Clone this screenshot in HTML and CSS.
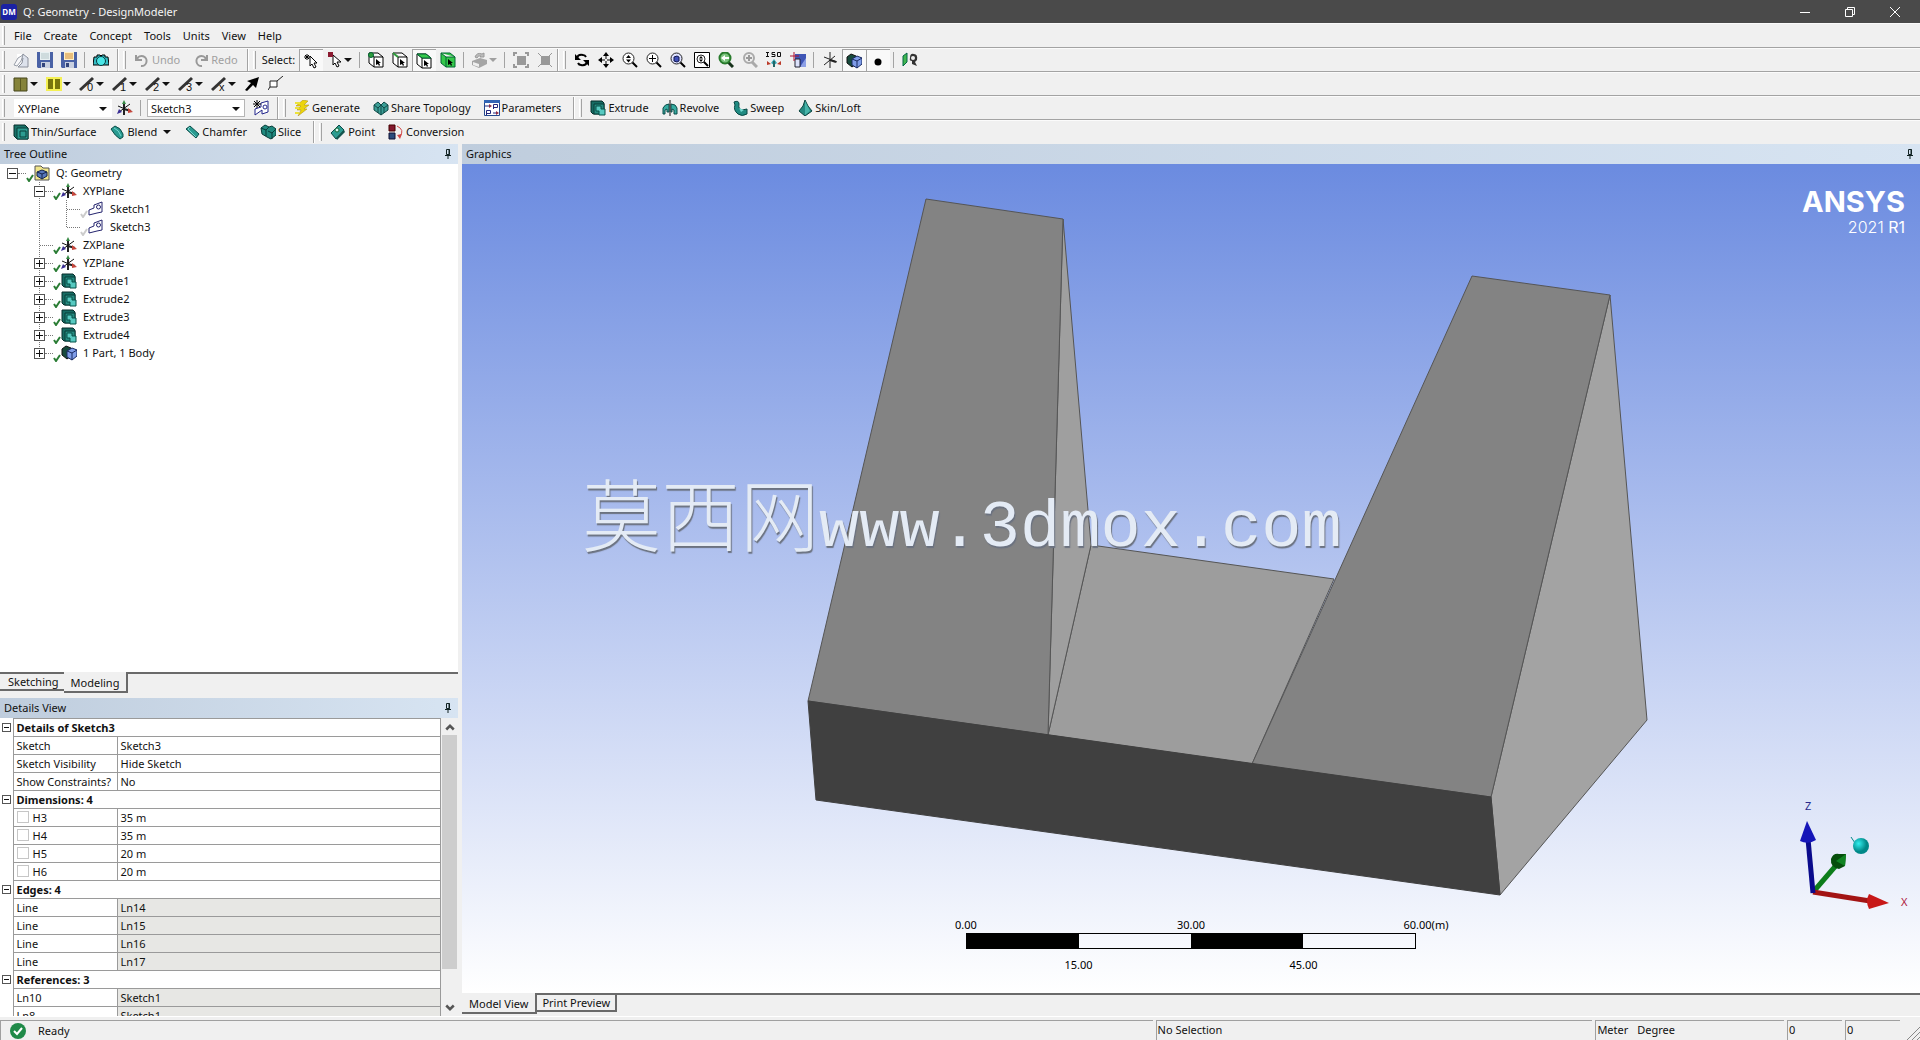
FILE: index.html
```html
<!DOCTYPE html>
<html lang="en">
<head>
<meta charset="utf-8">
<title>Q: Geometry - DesignModeler</title>
<link rel="stylesheet" href="styles.css">
</head>
<body>
<svg class="sprite" aria-hidden="true">
  <symbol id="new" viewBox="0 0 16 16"><path d="M4 2h8l3 3v10H5z" fill="#fff"/><path d="M10 2l5 4v9H5l4-4 1-5H8z" fill="#dde2ec" stroke="#8a8f9b"/><path d="M1 13l4-7 5-3-2 6-4 5z" fill="#f8f8fa" stroke="#999fa9"/></symbol>
  <symbol id="save" viewBox="0 0 16 16"><path d="M0 0h16v16H1l-1-1z" fill="#4a62a6"/><path d="M3 0h10v8H3z" fill="#e8f0f2"/><path d="M4 2h8M4 4h8M4 6h8" stroke="#b5c6c8"/><path d="M4 10h9v6H4z" fill="#c9d0e0"/><path d="M5 11h3v4H5z" fill="#33457c"/></symbol>
  <symbol id="saveas" viewBox="0 0 16 16"><path d="M0 0h16v16H1l-1-1z" fill="#4a62a6"/><path d="M3 0h10v8H3z" fill="#fff1c6"/><path d="M4 2h8M4 4h8M4 6h8" stroke="#d08a32"/><path d="M4 10h9v6H4z" fill="#c9d0e0"/><path d="M5 11h3v4H5z" fill="#33457c"/></symbol>
  <symbol id="camera" viewBox="0 0 16 16"><path d="M1 5h3V3h3l1 1 1-1h3v2h3l1 8H0z" fill="#35bcc4" stroke="#000"/><circle cx="8" cy="9" r="4.500" fill="#49e6e6" stroke="#07383c"/></symbol>
  <symbol id="undo" viewBox="0 0 16 16"><path d="M3 7a5 5 0 1 1 4 7" fill="none" stroke="#999" stroke-width="2"/><path d="M2 3v5h6" fill="none" stroke="#999" stroke-width="2"/></symbol>
  <symbol id="redo" viewBox="0 0 16 16"><path d="M13 7a5 5 0 1 0-4 7" fill="none" stroke="#999" stroke-width="2"/><path d="M14 3v5H8" fill="none" stroke="#999" stroke-width="2"/></symbol>
  <symbol id="cursor" viewBox="0 0 16 16"><path d="M7 3v10l2-2 2 4 2-1-2-4h3z" fill="#fff" stroke="#000"/><path d="M4 1v6M1 4h6M2 2l4 4M6 2L2 6" stroke="#000"/></symbol>
  <symbol id="pick" viewBox="0 0 16 16"><path d="M6 3v10l2-2 2 4 2-1-2-4h4z" fill="#fff" stroke="#000"/><path d="M1 0h5v5H1z" fill="#8b1a30"/></symbol>
  <symbol id="fpoint" viewBox="0 0 16 16"><path d="M1 1h9l5 4v10H6l-5-4z M1 1l5 4h9M6 5v10" fill="#fff" stroke="#000"/><circle cx="3" cy="3" r="2.500" fill="#2f9c3c" stroke="#063"/><path d="M8 7v6l2-1 1 2 1-1-1-2h2z"/></symbol>
  <symbol id="fedge" viewBox="0 0 16 16"><path d="M1 1h9l5 4v10H6l-5-4z M1 1l5 4h9M6 5v10" fill="#fff" stroke="#000"/><path d="M1 1l5 4" stroke="#2f9c3c" stroke-width="2"/><path d="M8 7v6l2-1 1 2 1-1-1-2h2z"/></symbol>
  <symbol id="fface" viewBox="0 0 16 16"><path d="M1 1h9l5 4v10H6l-5-4z M1 1l5 4h9M6 5v10" fill="#fff" stroke="#000"/><path d="M1 1h9l5 4H6z" fill="#35c84b" stroke="#063"/><path d="M8 7v6l2-1 1 2 1-1-1-2h2z"/></symbol>
  <symbol id="fbody" viewBox="0 0 16 16"><path d="M1 1h9l5 4v10H6l-5-4z M1 1l5 4h9M6 5v10" fill="#35c84b" stroke="#063"/><path d="M8 7v6l2-1 1 2 1-1-1-2h2z"/></symbol>
  <symbol id="extend" viewBox="0 0 16 16"><path d="M0 9l8-3 7 2v4l-8 4-7-3z" fill="#a5a5a5"/><path d="M1 10l6 2v3l-6-2z" fill="#eee"/><path d="M3 5q2-5 7-3l2-1v4H8l1-1Q6 3 5 6z" fill="#bbb" stroke="#999"/></symbol>
  <symbol id="grow" viewBox="0 0 16 16"><path d="M4 4h9v9H4z" fill="#999"/><path d="M1 4V1h3M12 1h3v3M15 12v3h-3M4 15H1v-3" fill="none" stroke="#999" stroke-width="2"/></symbol>
  <symbol id="shrink" viewBox="0 0 16 16"><path d="M4 4h9v9H4z" fill="#999"/><path d="M1 1l4 4M15 1l-3 3M1 15l3-3M15 15l-3-3" stroke="#999"/></symbol>
  <symbol id="rotate" viewBox="0 0 16 16"><path d="M3 6q1-4 6-3 2 0 3 2M13 10q-1 4-6 3-2 0-3-2" fill="none" stroke="#000" stroke-width="2"/><path d="M1 2v6h6zM15 14V8H9z"/></symbol>
  <symbol id="pan" viewBox="0 0 16 16"><path d="M8 3v4M8 9v4M3 8h4M9 8h4" stroke="#000"/><path d="M8 0l3 4H5zM8 16l3-4H5zM0 8l4-3v6zM16 8l-4-3v6z"/></symbol>
  <symbol id="zoom" viewBox="0 0 16 16"><path d="M10 10l5 5" stroke="#000" stroke-width="2"/><circle cx="6.500" cy="6.500" r="5.500" fill="#fff" stroke="#222"/><path d="M4 6l2.500-3L9 6zM4 7.500h5l-2.500 3z"/></symbol>
  <symbol id="zoomin" viewBox="0 0 16 16"><path d="M10 10l5 5" stroke="#000" stroke-width="2"/><circle cx="6.500" cy="6.500" r="5.500" fill="#fff" stroke="#222"/><path d="M3 6.500h7M6.500 3v7" stroke="#000"/></symbol>
  <symbol id="zoomfit" viewBox="0 0 16 16"><path d="M10 10l5 5" stroke="#000" stroke-width="2"/><circle cx="6.500" cy="6.500" r="5.500" fill="#dfe2ff" stroke="#222"/><path d="M4 5l3-1 2 1v4l-2 1-3-1z" fill="#4050b8" stroke="#101850"/></symbol>
  <symbol id="zoombox" viewBox="0 0 16 16"><path d="M.5.500h15v15H.5z" fill="#fff" stroke="#000"/><path d="M9 9l5 5" stroke="#000" stroke-width="2"/><circle cx="7" cy="7" r="4" fill="#fff" stroke="#222"/><path d="M5 6.500L7 4l2 2.500zM5 7.500h4L7 10z"/></symbol>
  <symbol id="prev" viewBox="0 0 16 16"><path d="M10 10l5 5" stroke="#17321b" stroke-width="3"/><circle cx="7" cy="6" r="5.500" fill="#7cc47e" stroke="#277a2b" stroke-width="2"/><path d="M3 6l4-3v2h4v2H7v2z" fill="#fff"/></symbol>
  <symbol id="next" viewBox="0 0 16 16"><path d="M10 10l5 5" stroke="#aaa" stroke-width="3"/><circle cx="7" cy="6" r="5" fill="#eee" stroke="#aaa" stroke-width="2"/><path d="M4 6h6M7 3v6" stroke="#999" stroke-width="2"/></symbol>
  <symbol id="iso" viewBox="0 0 16 16"><path d="M1.500 0v5M0 .5h3M0 4.500h3M9 .5H6v2h3v2H5.500M11.500.500h3v4h-3z" fill="none" stroke="#111"/><path d="M8 7l3 4-3 2-3-2z" fill="#36a4b4"/><path d="M8 9v6" stroke="#266" stroke-width="2"/><path d="M5 12l-4-3v4zM11 12l4-3v4z" fill="#bb3b2a"/></symbol>
  <symbol id="lookat" viewBox="0 0 16 16"><path d="M5 2h11v13H5z" fill="#3e55b5"/><path d="M10 15l6-9v9z" fill="#8da0e6"/><path d="M5 7h5v8H5z" fill="#dce2fb" stroke="#223"/><path d="M4 0v9M0 4h9" stroke="#b01030"/></symbol>
  <symbol id="plane3" viewBox="0 0 16 16"><path d="M8 0v16M2 13L13 4M2 5l13 5" stroke="#222"/><path d="M8 8l6 2" stroke="#222" stroke-width="2"/></symbol>
  <symbol id="model" viewBox="0 0 16 16"><path d="M1 4l4-3 5 2v8l-4 3-5-4z" fill="#174a3c" stroke="#111"/><path d="M6 6l5-3 5 2v6l-5 4-5-3z" fill="#7f9ce8" stroke="#192a60"/><path d="M6 6l5 2 5-3M11 8v7" fill="none" stroke="#192a60"/></symbol>
  <symbol id="point" viewBox="0 0 16 16"><circle cx="8" cy="9" r="3.500"/></symbol>
  <symbol id="face" viewBox="0 0 16 16"><path d="M1 4l4-3v9l-4 4z" fill="#41b64e" stroke="#064"/><path d="M8 6q0-5 4-4 4 0 3 6l-2 2 2 4-5-2V9q-3 0-2-3" fill="#333"/><circle cx="11" cy="6" r="2" fill="#eee"/></symbol>
  <symbol id="cfront" viewBox="0 0 16 16"><path d="M1 2h13v13H1z" fill="#85833a" stroke="#44441a"/><path d="M7.500 2v13" stroke="#5a5920"/></symbol>
  <symbol id="cshare" viewBox="0 0 16 16"><path d="M0 1h16v14H0z" fill="#f4f054"/><path d="M2 3h5v10H2zM9 3h5v10H9z" fill="#77750d"/></symbol>
  <symbol id="edge" viewBox="0 0 16 16"><path d="M1 14L14 2" stroke="#333" stroke-width="3"/></symbol>
  <symbol id="arrow" viewBox="0 0 16 16"><path d="M15 1l-3 11-3-3-6 6-2-1 6-7-4-2z"/></symbol>
  <symbol id="vertex" viewBox="0 0 16 16"><path d="M2 5h7v6H2zM9 5l6-5M2 11l-2 3" fill="#fff" stroke="#222"/></symbol>
  <symbol id="axes" viewBox="0 0 16 16"><path d="M7 2v13M7 9l7 2" stroke="#222" stroke-width="2"/><path d="M13 4L2 12M1 6l7 3" stroke="#111"/><path d="M5 4l2-4 2 4z" fill="#398a45"/><path d="M11 8l5 4-5 1z" fill="#c7463c"/><path d="M0 14l2-5 3 3z" fill="#3a2e94"/></symbol>
  <symbol id="sketchnew" viewBox="0 0 16 16"><path d="M2 15v-6l6-2V3l7-2v11l-6 2v-4z" fill="#fff" stroke="#23268c"/><circle cx="12" cy="7" r="2" fill="none" stroke="#23268c"/><path d="M4 0v8M0 4h8M1 1l6 6M7 1L1 7" stroke="#000"/></symbol>
  <symbol id="sketch" viewBox="0 0 16 16"><path d="M1 14V9l5-2V4l8-3v10l-5 1-4 1z" fill="#fff" stroke="#24246e"/><circle cx="10.500" cy="6" r="2" fill="none" stroke="#24246e"/></symbol>
  <symbol id="bolt" viewBox="0 0 16 16"><path d="M9 0l5 1-4 4h5l-5 4h3L4 16l3-6H3l4-4H2z" fill="#ecd40c" stroke="#a88b10" stroke-width=".5"/><path d="M1 3h5M1 8h4M1 13h4" stroke="#ece33a" stroke-width="2"/></symbol>
  <symbol id="share" viewBox="0 0 16 16"><path d="M1 5l4-3 3 3 3-3 4 3v5l-7 5-7-5z" fill="#3b9e96" stroke="#114a48"/><path d="M1 5l4 3 3-3 3 3 4-3M5 8v5M11 8v5M8 5v10" fill="none" stroke="#114a48"/></symbol>
  <symbol id="param" viewBox="0 0 16 16"><path d="M.5.500h15v15H.5z" fill="#fff" stroke="#23488d"/><path d="M0 0h16v3H0z" fill="#3264b4"/><path d="M1 6h4M9.500 9V4.500h4v3h-4M2.500 15v-4.500h4v3h-4M9 13h4" fill="none" stroke="#23277c"/><path d="M5 4l3 2-3 2zM12 11l3 2-3 2z" fill="#912b45"/></symbol>
  <symbol id="extrude" viewBox="0 0 16 16"><path d="M1 1h11l2 2v11H3l-2-2z" fill="#176b63" stroke="#072d2b"/><path d="M4 4h10v10H4z" fill="#258b80" stroke="#083d39"/><path d="M6 6h5v3h4v6h-6v-4H6z" fill="#56c9c0" stroke="#075049"/></symbol>
  <symbol id="revolve" viewBox="0 0 16 16"><path d="M1 8q2-4 6-4v8H5V9l-2 1v4H1zM9 4q5 0 6 4v6h-3v-4l-2-1v3H9z" fill="#36aba0" stroke="#0b4b48"/><path d="M8 0v16" stroke="#111"/></symbol>
  <symbol id="sweep" viewBox="0 0 16 16"><path d="M2 2q5-2 5 2-1 5 3 6l5-1v5q-5 3-9 0-5-4-3-9z" fill="#218b82" stroke="#084743"/><path d="M7 8l5 2-3 2z" fill="#74dad1"/></symbol>
  <symbol id="loft" viewBox="0 0 16 16"><path d="M8 0l3 6 4 5-7 5-6-5 4-5z" fill="#248880" stroke="#0c4540"/><path d="M8 1v14l5-4z" fill="#47b5aa"/></symbol>
  <symbol id="thin" viewBox="0 0 16 16"><path d="M1 1h11l3 3v11H4l-3-3z" fill="#187167" stroke="#072d2b"/><path d="M4 4h11v11H4zM7 7h6v6H7z" fill="#2b9c91" stroke="#083d39"/></symbol>
  <symbol id="blend" viewBox="0 0 16 16"><path d="M2 5l4-3q6 2 8 8v3l-3 2Q6 12 2 5z" fill="#299b91" stroke="#0b4d49"/><path d="M5 4q5 2 7 8" fill="none" stroke="#78d7cf"/></symbol>
  <symbol id="chamfer" viewBox="0 0 16 16"><path d="M2 5l4-3 9 8-3 4z" fill="#299b91" stroke="#0b4d49"/><path d="M6 3L4 5l8 8" fill="none" stroke="#78d7cf"/></symbol>
  <symbol id="slice" viewBox="0 0 16 16"><path d="M1 4l4-3 4 2 3-1 4 3v6l-5 4-4-2-5-3z" fill="#208a7f" stroke="#083d39"/><path d="M1 4l5 2 3-3M6 6v6M8 7l4 2 4-4M12 9v6" fill="none" stroke="#073b38"/></symbol>
  <symbol id="cpoint" viewBox="0 0 16 16"><path d="M1 9l8-8 5 5-8 9z" fill="#2b9c91" stroke="#0d4846"/><path d="M6 14l8-8 1 2-8 8z" fill="#14564f"/><circle cx="7" cy="6" r="2" fill="#d5f8f5" stroke="#163"/></symbol>
  <symbol id="convert" viewBox="0 0 16 16"><path d="M1 1h6v6H1z" fill="#84192e" stroke="#400"/><path d="M1 9h6v6H1z" fill="#294b7c" stroke="#113"/><path d="M9 2q8 4 3 10" fill="none" stroke="#d04646"/><path d="M9 11l5-1-2 5z" fill="#d04646"/></symbol>
  <symbol id="project" viewBox="0 0 16 16"><path d="M1 3V1h6l2 2h6v12H1z" fill="#f0e58a" stroke="#555"/><path d="M3 7l5-2 5 2v4l-5 3-5-3z" fill="#5878bd" stroke="#14244b"/><path d="M3 7l5 2 5-2M8 9v5" fill="none" stroke="#14244b"/></symbol>
  <symbol id="check" viewBox="0 0 8 8"><path d="M1 4l2 3 4-6" fill="none" stroke="currentColor" stroke-width="2"/></symbol>
  <symbol id="down" viewBox="0 0 8 8"><path d="M0 2h8L4 6z" fill="currentColor"/></symbol>
  <symbol id="pin" viewBox="0 0 8 12"><path d="M2.500 1.500h3v5h-3zM1 7.500h6M4 8v3M5 1v6" fill="none" stroke="#122"/></symbol>
</svg>

<header class="titlebar">
  <span class="dm">DM</span><h1>Q: Geometry - DesignModeler</h1>
  <div class="winbtns">
    <button aria-label="Minimize"><svg viewBox="0 0 12 12"><path d="M1 6.500h10"/></svg></button>
    <button aria-label="Restore"><svg viewBox="0 0 12 12"><path d="M1.500 3.500h7v7h-7zM3.500 3V1.500h7v7H9"/></svg></button>
    <button aria-label="Close"><svg viewBox="0 0 12 12"><path d="M1 1l10 10M11 1L1 11"/></svg></button>
  </div>
</header>

<nav class="bar menu">
  <i class="grip"></i>
  <button>File</button><button>Create</button><button>Concept</button><button>Tools</button><button>Units</button><button>View</button><button>Help</button>
</nav>

<div class="bar" role="toolbar" aria-label="Standard">
  <div class="group"><i class="grip"></i>
    <button class="tb" aria-label="New"><svg><use href="#new"/></svg></button>
    <button class="tb" aria-label="Save"><svg><use href="#save"/></svg></button>
    <button class="tb" aria-label="Export"><svg><use href="#saveas"/></svg></button>
    <i class="sep"></i>
    <button class="tb" aria-label="Image capture"><svg><use href="#camera"/></svg></button>
  </div>
  <div class="group tight"><i class="grip"></i>
    <button class="tb text" disabled><svg><use href="#undo"/></svg>Undo</button>
    <button class="tb text" disabled><svg><use href="#redo"/></svg>Redo</button>
  </div>
  <div class="group tight"><i class="grip"></i>
    <span class="label">Select:</span>
    <button class="tb on" aria-label="New selection"><svg><use href="#cursor"/></svg></button>
    <button class="tb drop" aria-label="Select mode"><svg><use href="#pick"/></svg><svg class="dn"><use href="#down"/></svg></button>
    <i class="sep"></i>
    <button class="tb" aria-label="Points"><svg><use href="#fpoint"/></svg></button>
    <button class="tb" aria-label="Edges"><svg><use href="#fedge"/></svg></button>
    <button class="tb on" aria-label="Faces"><svg><use href="#fface"/></svg></button>
    <button class="tb" aria-label="Bodies"><svg><use href="#fbody"/></svg></button>
    <i class="sep"></i>
    <button class="tb drop" disabled aria-label="Extend selection"><svg><use href="#extend"/></svg><svg class="dn"><use href="#down"/></svg></button>
    <i class="sep"></i>
    <button class="tb" disabled aria-label="Expand"><svg><use href="#grow"/></svg></button>
    <button class="tb" disabled aria-label="Shrink"><svg><use href="#shrink"/></svg></button>
  </div>
  <div class="group last"><i class="grip"></i>
    <button class="tb" aria-label="Rotate"><svg><use href="#rotate"/></svg></button>
    <button class="tb" aria-label="Pan"><svg><use href="#pan"/></svg></button>
    <button class="tb" aria-label="Zoom"><svg><use href="#zoom"/></svg></button>
    <button class="tb" aria-label="Zoom in"><svg><use href="#zoomin"/></svg></button>
    <button class="tb" aria-label="Zoom to fit"><svg><use href="#zoomfit"/></svg></button>
    <button class="tb" aria-label="Box zoom"><svg><use href="#zoombox"/></svg></button>
    <button class="tb" aria-label="Previous view"><svg><use href="#prev"/></svg></button>
    <button class="tb" disabled aria-label="Next view"><svg><use href="#next"/></svg></button>
    <button class="tb" aria-label="ISO view"><svg><use href="#iso"/></svg></button>
    <button class="tb" aria-label="Look at"><svg><use href="#lookat"/></svg></button>
    <i class="sep"></i>
    <button class="tb" aria-label="Display plane"><svg><use href="#plane3"/></svg></button>
    <button class="tb on" aria-label="Display model"><svg><use href="#model"/></svg></button>
    <button class="tb on" aria-label="Display points"><svg><use href="#point"/></svg></button>
    <i class="sep"></i>
    <button class="tb" aria-label="Look at face"><svg><use href="#face"/></svg></button>
  </div>
</div>

<div class="bar" role="toolbar" aria-label="Display">
  <i class="grip"></i>
  <button class="tb drop" aria-label="Face coloring"><svg><use href="#cfront"/></svg><svg class="dn"><use href="#down"/></svg></button>
  <button class="tb drop" aria-label="Edge coloring"><svg><use href="#cshare"/></svg><svg class="dn"><use href="#down"/></svg></button>
  <button class="tb drop edge"><svg><use href="#edge"/></svg><b>0</b><svg class="dn"><use href="#down"/></svg></button>
  <button class="tb drop edge"><svg><use href="#edge"/></svg><b>1</b><svg class="dn"><use href="#down"/></svg></button>
  <button class="tb drop edge"><svg><use href="#edge"/></svg><b>2</b><svg class="dn"><use href="#down"/></svg></button>
  <button class="tb drop edge"><svg><use href="#edge"/></svg><b>3</b><svg class="dn"><use href="#down"/></svg></button>
  <button class="tb drop edge"><svg><use href="#edge"/></svg><b>x</b><svg class="dn"><use href="#down"/></svg></button>
  <button class="tb" aria-label="Edge direction"><svg><use href="#arrow"/></svg></button>
  <button class="tb" aria-label="Display vertices"><svg><use href="#vertex"/></svg></button>
</div>

<div class="bar" role="toolbar" aria-label="Features">
  <div class="group"><i class="grip"></i>
    <span class="combo flat"><select aria-label="Active plane"><option>XYPlane</option></select><svg class="dn"><use href="#down"/></svg></span>
    <button class="tb" aria-label="New plane"><svg><use href="#axes"/></svg></button>
    <i class="sep"></i>
    <span class="combo"><select aria-label="Active sketch"><option>Sketch3</option></select><svg class="dn"><use href="#down"/></svg></span>
    <button class="tb" aria-label="New sketch"><svg><use href="#sketchnew"/></svg></button>
  </div>
  <div class="group wide"><i class="grip"></i>
    <button class="tb text"><svg><use href="#bolt"/></svg>Generate</button>
    <button class="tb text"><svg><use href="#share"/></svg>Share Topology</button>
    <button class="tb text"><svg><use href="#param"/></svg>Parameters</button>
  </div>
  <div class="group last"><i class="grip"></i>
    <button class="tb text"><svg><use href="#extrude"/></svg>Extrude</button>
    <button class="tb text"><svg><use href="#revolve"/></svg>Revolve</button>
    <button class="tb text"><svg><use href="#sweep"/></svg>Sweep</button>
    <button class="tb text"><svg><use href="#loft"/></svg>Skin/Loft</button>
  </div>
</div>

<div class="bar lastbar" role="toolbar" aria-label="Modify">
  <div class="group wide"><i class="grip"></i>
    <button class="tb text"><svg><use href="#thin"/></svg>Thin/Surface</button>
    <button class="tb text"><svg><use href="#blend"/></svg>Blend<svg class="dn"><use href="#down"/></svg></button>
    <button class="tb text"><svg><use href="#chamfer"/></svg>Chamfer</button>
    <button class="tb text"><svg><use href="#slice"/></svg>Slice</button>
  </div>
  <div class="group last"><i class="grip"></i>
    <button class="tb text"><svg><use href="#cpoint"/></svg>Point</button>
    <button class="tb text"><svg><use href="#convert"/></svg>Conversion</button>
  </div>
</div>

<main class="work">
  <aside class="side">
    <section class="outline">
      <h2 class="phead">Tree Outline<svg class="pin"><use href="#pin"/></svg></h2>
      <ul class="tree">
        <li><div class="node"><button class="box" aria-label="Collapse"></button><i class="dash"></i><svg class="ck"><use href="#check"/></svg><svg class="ic"><use href="#project"/></svg>Q: Geometry</div>
          <ul>
            <li><div class="node"><button class="box" aria-label="Collapse"></button><i class="dash"></i><svg class="ck"><use href="#check"/></svg><svg class="ic"><use href="#axes"/></svg>XYPlane</div>
              <ul>
                <li><div class="node leaf"><i class="dash"></i><svg class="ck dim"><use href="#check"/></svg><svg class="ic"><use href="#sketch"/></svg>Sketch1</div></li>
                <li><div class="node leaf"><i class="dash"></i><svg class="ck dim"><use href="#check"/></svg><svg class="ic"><use href="#sketch"/></svg>Sketch3</div></li>
              </ul>
            </li>
            <li><div class="node leaf"><i class="dash"></i><svg class="ck"><use href="#check"/></svg><svg class="ic"><use href="#axes"/></svg>ZXPlane</div></li>
            <li><div class="node"><button class="box plus" aria-label="Expand"></button><i class="dash"></i><svg class="ck"><use href="#check"/></svg><svg class="ic"><use href="#axes"/></svg>YZPlane</div></li>
            <li><div class="node"><button class="box plus" aria-label="Expand"></button><i class="dash"></i><svg class="ck"><use href="#check"/></svg><svg class="ic"><use href="#extrude"/></svg>Extrude1</div></li>
            <li><div class="node"><button class="box plus" aria-label="Expand"></button><i class="dash"></i><svg class="ck"><use href="#check"/></svg><svg class="ic"><use href="#extrude"/></svg>Extrude2</div></li>
            <li><div class="node"><button class="box plus" aria-label="Expand"></button><i class="dash"></i><svg class="ck"><use href="#check"/></svg><svg class="ic"><use href="#extrude"/></svg>Extrude3</div></li>
            <li><div class="node"><button class="box plus" aria-label="Expand"></button><i class="dash"></i><svg class="ck"><use href="#check"/></svg><svg class="ic"><use href="#extrude"/></svg>Extrude4</div></li>
            <li><div class="node"><button class="box plus" aria-label="Expand"></button><i class="dash"></i><svg class="ck"><use href="#check"/></svg><svg class="ic"><use href="#model"/></svg>1 Part, 1 Body</div></li>
          </ul>
        </li>
      </ul>
      <div class="tabs"><button class="tab">Sketching</button><button class="tab current">Modeling</button><i class="rest"></i></div>
    </section>

    <section class="details">
      <h2 class="phead">Details View<svg class="pin"><use href="#pin"/></svg></h2>
      <div class="dbody">
        <div class="dscroll">
          <table>
            <colgroup><col class="c0"><col class="c1"><col></colgroup>
            <tr><td><button class="box" aria-label="Collapse"></button></td><th colspan="2">Details of Sketch3</th></tr>
            <tr><td></td><td>Sketch</td><td>Sketch3</td></tr>
            <tr><td></td><td>Sketch Visibility</td><td>Hide Sketch</td></tr>
            <tr><td></td><td>Show Constraints?</td><td>No</td></tr>
            <tr><td><button class="box" aria-label="Collapse"></button></td><th colspan="2">Dimensions: 4</th></tr>
            <tr><td></td><td><label><input type="checkbox">H3</label></td><td>35 m</td></tr>
            <tr><td></td><td><label><input type="checkbox">H4</label></td><td>35 m</td></tr>
            <tr><td></td><td><label><input type="checkbox">H5</label></td><td>20 m</td></tr>
            <tr><td></td><td><label><input type="checkbox">H6</label></td><td>20 m</td></tr>
            <tr><td><button class="box" aria-label="Collapse"></button></td><th colspan="2">Edges: 4</th></tr>
            <tr class="ro"><td></td><td>Line</td><td>Ln14</td></tr>
            <tr class="ro"><td></td><td>Line</td><td>Ln15</td></tr>
            <tr class="ro"><td></td><td>Line</td><td>Ln16</td></tr>
            <tr class="ro"><td></td><td>Line</td><td>Ln17</td></tr>
            <tr><td><button class="box" aria-label="Collapse"></button></td><th colspan="2">References: 3</th></tr>
            <tr class="ro"><td></td><td>Ln10</td><td>Sketch1</td></tr>
            <tr class="ro"><td></td><td>Ln8</td><td>Sketch1</td></tr>
          </table>
        </div>
        <div class="scroll">
          <button aria-label="Scroll up"><svg viewBox="0 0 8 8"><path d="M1 6l3-3 3 3"/></svg></button>
          <i class="thumb"></i>
          <button aria-label="Scroll down"><svg viewBox="0 0 8 8"><path d="M1 2l3 3 3-3"/></svg></button>
        </div>
      </div>
    </section>
  </aside>

  <section class="graphics">
    <h2 class="phead">Graphics<svg class="pin"><use href="#pin"/></svg></h2>
    <div class="view">
      <svg class="body3d" viewBox="0 0 1458 829" role="img" aria-label="Solid body">
        <g stroke="#555" stroke-linejoin="round">
          <path d="M586 571L629 381L872 415L790 600z" fill="#9d9d9d"/>
          <path d="M601 55L629 381L586 571z" fill="#9f9f9f"/>
          <path d="M464 35L601 55L586 571L346 537z" fill="#838383"/>
          <path d="M1148 131L1185 556L1038 731L1029 633z" fill="#a3a3a3"/>
          <path d="M1010 112L1148 131L1029 633L790 600z" fill="#838383"/>
          <path d="M346 537L1029 633L1038 731L354 636z" fill="#404040" stroke="#404040"/>
        </g>
      </svg>
      <div class="brand"><strong>ANSYS</strong><span>2021 <b>R1</b></span></div>
      <div class="mark"><span>莫西网</span>www.3dmox.com</div>
      <div class="scale">
        <div class="ticks"><span>0.00</span><span>30.00</span><span>60.00<em>(m)</em></span></div>
        <div class="ruler"><i></i><i></i><i></i><i></i></div>
        <div class="ticks low"><span>15.00</span><span>45.00</span></div>
      </div>
      <svg class="triad" viewBox="0 0 120 120" role="img" aria-label="Axis triad">
        <defs><radialGradient id="ball" cx=".35" cy=".35"><stop offset="0" stop-color="#3ee"/><stop offset="1" stop-color="#088"/></radialGradient></defs>
        <path d="M19 94L44 65" stroke="#0d7d1b" stroke-width="5"/><path d="M36 62q2-6 8-5l7 0-1 12-6 3q-9-2-8-10z" fill="#064f0c"/><path d="M51 57l-1 12-9-5z" fill="#118423"/>
        <path d="M18 95L75 104" stroke="#a31414" stroke-width="5"/><path d="M74 97l20 9-20 6q-4-8 0-15z" fill="#c81818"/>
        <path d="M18 96L13 42" stroke="#0a0a8c" stroke-width="5"/><path d="M12 24l9 19q-8 5-16 1z" fill="#1515b8"/>
        <path d="M56 40l4 6" stroke="#088"/><circle cx="66" cy="49" r="8" fill="url(#ball)"/>
        <text x="10" y="13" fill="#2a2a8c">Z</text><text x="106" y="109" fill="#b02040">X</text>
      </svg>
    </div>
    <div class="tabs gtabs"><button class="tab current">Model View</button><button class="tab">Print Preview</button><i class="rest"></i></div>
  </section>
</main>

<footer class="status">
  <div class="cell ready"><svg viewBox="0 0 16 16"><circle cx="8" cy="8" r="8" fill="#1f8a48"/><path d="M4 8l3 3 5-6" fill="none" stroke="#fff" stroke-width="2"/></svg>Ready</div>
  <div class="cell sel">No Selection</div>
  <div class="cell unit"><span>Meter</span><span>Degree</span></div>
  <div class="cell num">0</div>
  <div class="cell num">0</div>
  <svg class="size" viewBox="0 0 14 14"><path d="M1 14L14 1M6 14l8-8M11 14l3-3" stroke="#888"/></svg>
</footer>
</body>
</html>
```
FILE: styles.css
```css
* { box-sizing: border-box; }
body {
  margin: 0;
  height: 100vh;
  display: flex;
  flex-direction: column;
  overflow: hidden;
  background: #f0f0f0;
  color: #111;
  font: 11px/16px "Noto Sans", "Open Sans", "Noto Sans CJK SC", sans-serif;
}
button, select, input { font: inherit; color: inherit; margin: 0; }
button { border: 0; padding: 0; background: none; }
h1, h2 { margin: 0; font-weight: 400; font-size: inherit; }
ul { list-style: none; margin: 0; padding: 0; }
svg { flex: none; display: block; }
.sprite { position: absolute; width: 0; height: 0; }

/* title bar */
.titlebar { display: flex; align-items: center; height: 23px; background: #4a4a4a; color: #f4f4f4; flex: none; }
.dm { width: 16px; margin: 0 6px 0 1px; background: #1b22a4; color: #fff; font-size: 8px; font-weight: 700; line-height: 16px; text-align: center; border-radius: 3px; }
.winbtns { margin-left: auto; display: flex; padding-right: 3px; }
.winbtns button { width: 45px; height: 21px; display: grid; place-items: center; }
.winbtns svg { width: 12px; height: 12px; fill: none; stroke: #fff; }

/* menus and toolbars */
.bar { display: flex; align-items: stretch; height: 24px; flex: none; border-bottom: 1px solid #a3a3a3; border-top: 1px solid #fbfbfb; }
.menu { height: 25px; }
.lastbar { border-bottom-color: #f0f0f0; }
.menu button { padding: 0 6px; }
.grip { flex: none; width: 3px; margin: 2px 4px 2px 2px; border-left: 1px solid #fff; border-right: 1px solid #a3a3a3; }
.menu .grip { margin-right: 3px; }
.group { display: flex; align-items: stretch; padding-right: 4px; border-right: 1px solid #a3a3a3; box-shadow: 1px 0 #fff; margin-right: 3px; }
.group.wide { padding-right: 3px; }
.group.tight { padding-right: 0; }
.group.last { border: 0; box-shadow: none; }
.tb { width: 24px; display: flex; align-items: center; padding-left: 4px; white-space: nowrap; }
.tb svg { width: 16px; height: 16px; }
.tb.text { width: auto; padding-right: 9px; gap: 2px; }
.tb.drop { width: 33px; gap: 1px; }
.tb .dn, .combo .dn { width: 8px; height: 8px; }
.tb.text .dn { margin-left: 4px; }
.tb.on { background: #f9f9f9; border-left: 1px solid #a3a3a3; border-top: 1px solid #a3a3a3; padding-left: 3px; }
.tb:disabled { color: #a0a0a0; }
.edge { position: relative; }
.edge b { position: absolute; left: 12px; top: 7px; font: 11px/14px "Liberation Sans", sans-serif; }
.sep { flex: none; width: 1px; margin: 3px 4px 3px 3px; background: #a3a3a3; }
.label { align-self: center; padding: 0 4px 0 2px; }
.combo { display: grid; grid-template-columns: 1fr 16px; align-items: center; width: 98px; margin: 2px 4px 2px 2px; background: #fff; border: 1px solid #b5b5b5; }
.combo.flat { margin: 2px 1px 2px 5px; border-color: #fff; }
.combo select { grid-area: 1 / 1 / 2 / 3; appearance: none; border: 0; background: none; padding: 0 0 0 3px; height: 18px; width: 100%; border-radius: 0; }
.combo .dn { grid-area: 1 / 2; justify-self: center; pointer-events: none; }

/* work area */
.work { flex: 1; min-height: 0; display: grid; grid-template-columns: 458px minmax(0, 1fr); column-gap: 4px; }
.side { display: flex; flex-direction: column; min-height: 0; }
.outline { flex: 555 1 0; min-height: 0; display: flex; flex-direction: column; }
.details { flex: 318 1 0; min-height: 0; display: flex; flex-direction: column; }
.phead { display: flex; align-items: center; justify-content: space-between; height: 20px; flex: none; padding: 0 6px 0 4px; background: linear-gradient(90deg, #bfcddd, #d7e4f2); }
.pin { width: 8px; height: 12px; }

.tree { flex: 1; min-height: 0; overflow: hidden; background: #fff; }
.node { display: flex; align-items: center; height: 18px; padding-left: 7px; }
.tree ul { position: relative; padding-left: 27px; }
.tree ul::before { content: ""; position: absolute; left: 39px; top: 0; bottom: 9px; border-left: 1px dotted #777; }
/* expander glyphs are drawn as centred bars */
.box { position: relative; display: block; width: 11px; height: 11px; border: 1px solid #555; background: linear-gradient(#111, #111) center / 7px 1px no-repeat #fff; }
.box.plus { background: linear-gradient(#111, #111) center / 7px 1px no-repeat, linear-gradient(#111, #111) center / 1px 7px no-repeat #fff; }
.dash { width: 8px; border-top: 1px dotted #777; }
.leaf { padding-left: 13px; }
.leaf .dash { width: 13px; }
.ck { width: 8px; height: 8px; color: #2b7d35; align-self: end; }
.dim { color: #ccc; }
.ic { width: 16px; height: 16px; margin-right: 6px; }

.tabs { display: flex; align-items: flex-start; height: 26px; flex: none; }
.tab { height: 19px; padding: 0 5px 0 8px; border: solid #6a6a6a; border-width: 2px 0 2px 0; }
.tab.current { height: 21px; padding: 3px 7px 0; border-width: 0 2px 2px 0; }
.rest { flex: 1; border-top: 2px solid #6a6a6a; }
.gtabs { height: 23px; }
.gtabs .tab:not(.current) { border-right-width: 2px; padding: 0 5px; }

.dbody { flex: 1; min-height: 0; display: flex; background: #fff; }
.dscroll { flex: 1; overflow: hidden; }
table { width: 100%; border-collapse: collapse; table-layout: fixed; }
.c0 { width: 13px; }
.c1 { width: 104px; }
td, th { height: 18px; padding: 0 0 1px 3px; border: 1px solid #9a9a9a; text-align: left; font-weight: 400; line-height: 15px; white-space: nowrap; }
th { font-weight: 700; }
td:first-child { border: 0; padding: 0 0 0 2px; }
table .box { width: 9px; height: 9px; background-size: 5px 1px; }
.ro td:last-child { background: #e7e7e4; }
label { display: flex; align-items: center; gap: 4px; }
label input { appearance: none; width: 12px; height: 12px; border: 1px solid #c6c6c6; }
.scroll { width: 17px; display: flex; flex-direction: column; background: #f0f0f0; }
.scroll button { height: 17px; display: grid; place-items: center; flex: none; }
.scroll svg { width: 10px; height: 10px; fill: none; stroke: #555; stroke-width: 2; }
.thumb { width: 15px; flex: 0 1 234px; margin: 0 1px auto; background: #cdcdcd; }

/* graphics */
.graphics { display: flex; flex-direction: column; min-width: 0; }
.view { flex: 1; min-height: 0; position: relative; background: linear-gradient(#6b8be0, #fff); }
.body3d { width: 100%; height: 100%; }
.brand { position: absolute; right: 15px; top: 23px; display: flex; flex-direction: column; align-items: flex-end; color: #fff; }
.brand strong { font: 700 29px/30px Inter, sans-serif; }
.brand span { font: 300 16px/20px Inter, sans-serif; }
.mark { position: absolute; left: 120px; top: 306px; display: flex; align-items: baseline; color: #e4ebf5; text-shadow: 1px 2px 1px #6b7280; font: 67px/84px "Liberation Mono", monospace; white-space: nowrap; }
.mark span { font: 300 79px/84px "Noto Sans CJK SC", sans-serif; }
.scale { position: absolute; left: 504px; bottom: 20px; width: 450px; color: #000; }
.ticks { display: flex; justify-content: space-between; margin: 0 -20px; }
.ticks span { width: 40px; text-align: center; white-space: nowrap; }
.ticks em { font-style: normal; margin-right: -20px; }
.ticks.low { justify-content: space-around; margin: 8px 0 0; }
.ruler { display: flex; height: 16px; border: 1px solid #000; }
.ruler i { flex: 1; }
.ruler i:nth-child(odd) { background: #000; }
.triad { position: absolute; right: 5px; bottom: 76px; width: 120px; height: 120px; font-size: 11px; }

/* status bar */
.status { display: flex; height: 24px; flex: none; padding-top: 3px; border-top: 1px solid #fff; }
.cell { border-top: 1px solid #a0a0a0; border-left: 1px solid #a0a0a0; padding-left: 1px; line-height: 17px; margin-right: 3px; }
.ready { flex: 1151 1 0; display: flex; gap: 12px; align-items: center; padding-left: 9px; }
.ready svg { width: 16px; height: 16px; }
.sel { flex: 438 1 0; }
.unit { flex: 188 1 0; display: flex; gap: 9px; }
.num { width: 55px; }
.size { width: 14px; height: 14px; align-self: flex-end; margin-left: 3px; }
```
